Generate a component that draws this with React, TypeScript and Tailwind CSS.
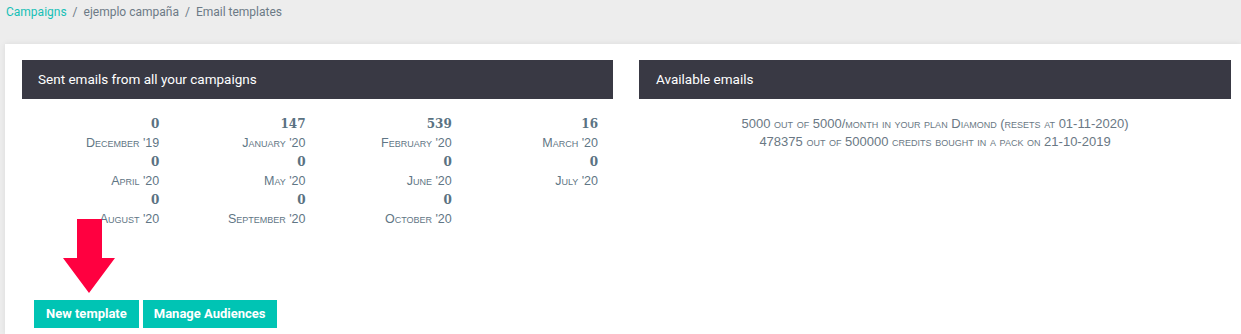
import React from 'react';

const months = [
  { n: '0', m: "December '19" },
  { n: '147', m: "January '20" },
  { n: '539', m: "February '20" },
  { n: '16', m: "March '20" },
  { n: '0', m: "April '20" },
  { n: '0', m: "May '20" },
  { n: '0', m: "June '20" },
  { n: '0', m: "July '20" },
  { n: '0', m: "August '20" },
  { n: '0', m: "September '20" },
  { n: '0', m: "October '20" },
];

export default function App() {
  return (
    <div className="min-h-[334px] bg-[#ededed] font-['Roboto',sans-serif]">
      {/* Breadcrumb */}
      <div className="flex h-[44px] items-start gap-[6px] pl-[6px] pt-[3px] text-[12px] text-[#6c7a86]">
        <span className="text-[#17c0b6]">Campaigns</span>
        <span>/</span>
        <span>ejemplo campaña</span>
        <span>/</span>
        <span>Email templates</span>
      </div>

      {/* Panel */}
      <div className="relative ml-[5px] min-h-[290px] bg-white pl-[17px] pt-[16px] shadow-[0_0_6px_rgba(0,0,0,0.08)]">
        <div className="flex gap-[26px]">
          {/* Sent emails */}
          <div className="w-[591px]">
            <div className="flex h-[39px] items-center bg-[#393944] pl-[16px] text-[13.5px] text-white">
              Sent emails from all your campaigns
            </div>
            <div className="-ml-[9px] mt-[16px] grid w-[585px] grid-cols-4 text-right leading-[19px]">
              {months.map((x, i) => (
                <div key={i} className="flex flex-col">
                  <span className="font-['DejaVu_Serif',serif] text-[12px] font-bold text-[#5a7282]">{x.n}</span>
                  <span className="font-['Liberation_Sans',sans-serif] text-[12.5px] text-[#5f7685] [font-variant:small-caps]">
                    {x.m}
                  </span>
                </div>
              ))}
            </div>
          </div>

          {/* Available emails */}
          <div className="w-[592px]">
            <div className="flex h-[39px] items-center bg-[#393944] pl-[17px] text-[13.5px] text-white">
              Available emails
            </div>
            <div className="mt-[16px] text-center font-['Liberation_Sans',sans-serif] text-[13px] leading-[18px] text-[#6a7884] [font-variant:small-caps]">
              <div>5000 out of 5000/month in your plan Diamond (resets at 01-11-2020)</div>
              <div>478375 out of 500000 credits bought in a pack on 21-10-2019</div>
            </div>
          </div>
        </div>

        {/* Buttons */}
        <div className="ml-[12px] mt-[71px] flex gap-[4px]">
          <button className="h-[28px] bg-[#00c4b4] px-[12px] text-[13px] font-bold text-white">New template</button>
          <button className="h-[28px] bg-[#00c4b4] px-[11px] text-[13px] font-bold text-white">Manage Audiences</button>
        </div>

        {/* Red arrow annotation */}
        <svg className="absolute left-[58px] top-[175px]" width="52" height="75" viewBox="0 0 52 75">
          <path d="M14 0 H39 V39 H52 L26 74 L0 39 H14 Z" fill="#ff0040" />
        </svg>
      </div>
    </div>
  );
}
